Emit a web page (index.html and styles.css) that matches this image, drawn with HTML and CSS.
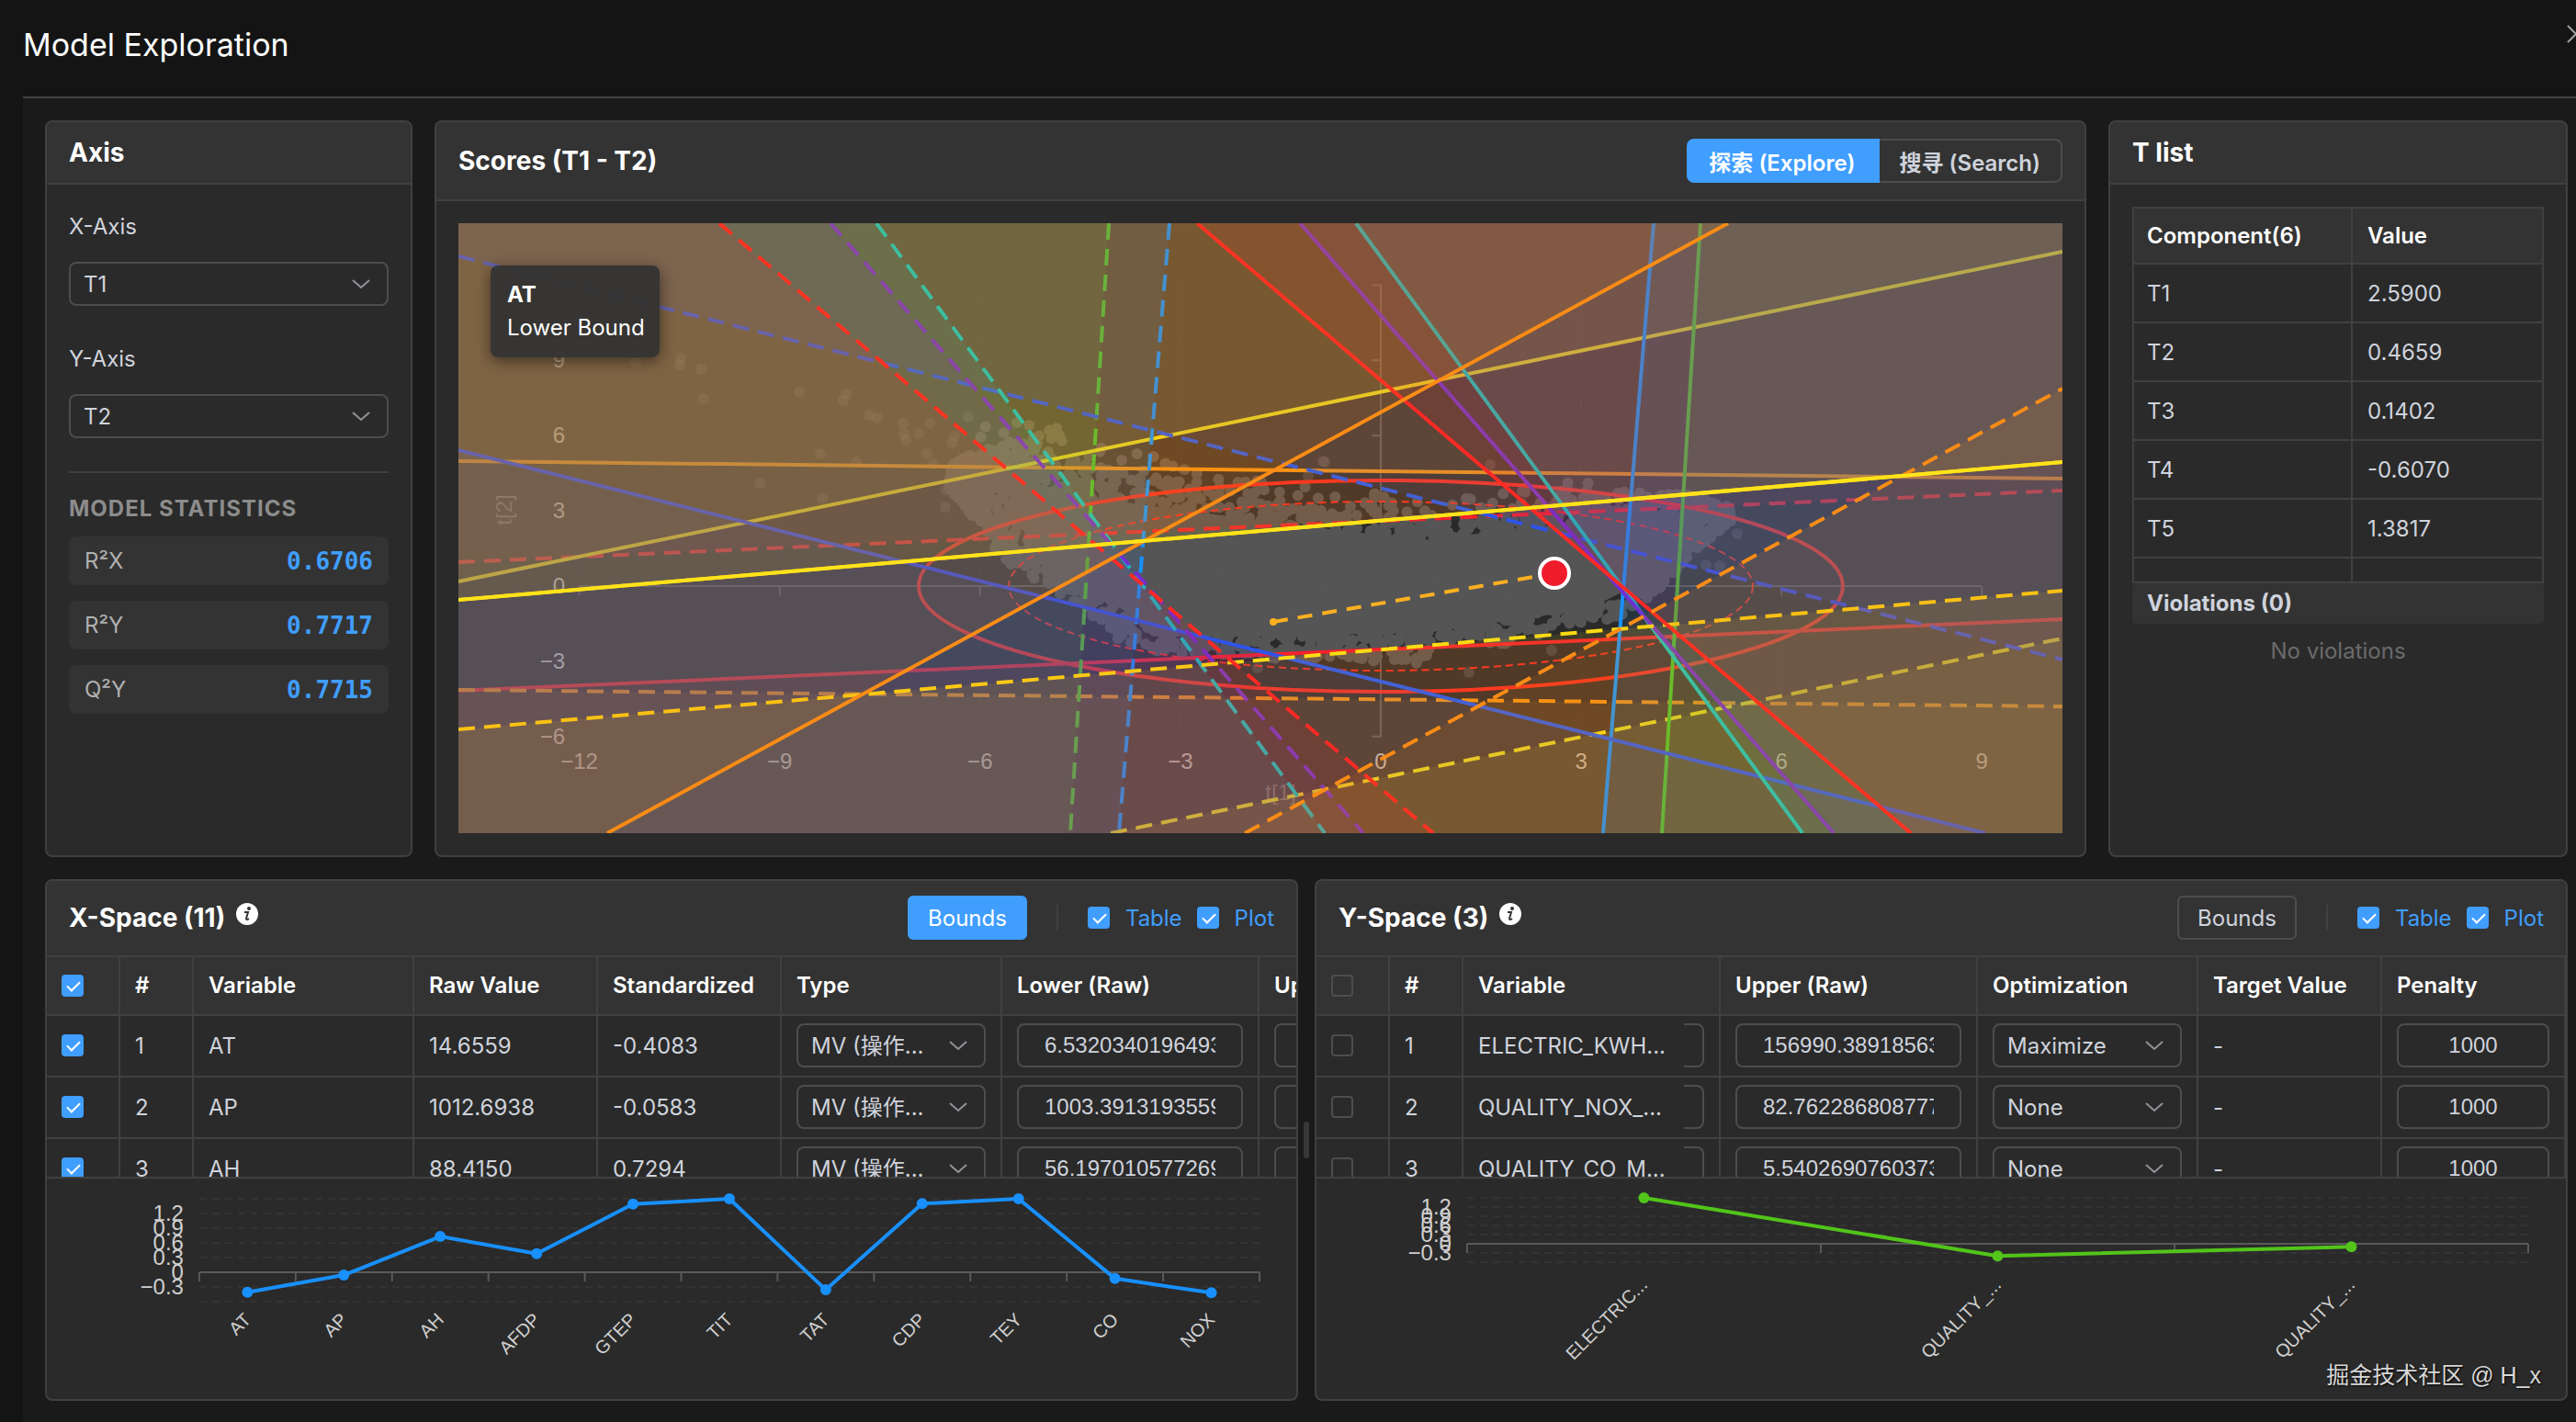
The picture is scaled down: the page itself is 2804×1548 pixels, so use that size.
FILE: index.html
```
<!DOCTYPE html>
<html lang="zh-CN">
<head>
    <meta charset="UTF-8">
    <meta name="viewport" content="width=device-width, initial-scale=1.0">
    <title>Model Exploration</title>
    <link rel="stylesheet" href="styles.css">
</head>
<body>
    <header class="page-header">
        <h1>Model Exploration</h1>
        <button class="close-btn" type="button" aria-label="Close">
            <svg viewBox="0 0 20 20" width="20" height="20"><path d="M1 1L19 19M19 1L1 19"/></svg>
        </button>
    </header>

    <main class="content">
        <div class="top-row">
            <section class="panel">
                <div class="panel-header"><h2>Axis</h2></div>
                <div class="panel-body">
                    <div class="field">
                        <label for="x-axis">X-Axis</label>
                        <div class="select-box">
                            <select id="x-axis"><option>T1</option><option>T2</option></select>
                            <svg class="chevron" viewBox="0 0 20 12"><path d="M1 2L10 10L19 2"/></svg>
                        </div>
                    </div>
                    <div class="field">
                        <label for="y-axis">Y-Axis</label>
                        <div class="select-box">
                            <select id="y-axis"><option>T2</option><option>T1</option></select>
                            <svg class="chevron" viewBox="0 0 20 12"><path d="M1 2L10 10L19 2"/></svg>
                        </div>
                    </div>
                    <div class="stats">
                        <h3>MODEL STATISTICS</h3>
                        <div class="stat"><span>R²X</span><strong>0.6706</strong></div>
                        <div class="stat"><span>R²Y</span><strong>0.7717</strong></div>
                        <div class="stat"><span>Q²Y</span><strong>0.7715</strong></div>
                    </div>
                </div>
            </section>

            <section class="panel">
                <div class="panel-header tall">
                    <h2>Scores (T1 - T2)</h2>
                    <div class="mode-switch">
                        <button type="button" class="active">探索 (Explore)</button>
                        <button type="button">搜寻 (Search)</button>
                    </div>
                </div>
                <div class="plot-body">
                    <div class="plot">
                        <svg id="scores" viewBox="0 0 1746 664"></svg>
                        <div class="tooltip">
                            <strong>AT</strong>
                            <span>Lower Bound</span>
                        </div>
                    </div>
                </div>
            </section>

            <section class="panel">
                <div class="panel-header"><h2>T list</h2></div>
                <div class="panel-body">
                    <div class="t-list">
                        <table>
                            <thead>
                                <tr><th class="col-component">Component(6)</th><th>Value</th></tr>
                            </thead>
                            <tbody>
                                <tr><td>T1</td><td>2.5900</td></tr>
                                <tr><td>T2</td><td>0.4659</td></tr>
                                <tr><td>T3</td><td>0.1402</td></tr>
                                <tr><td>T4</td><td>-0.6070</td></tr>
                                <tr><td>T5</td><td>1.3817</td></tr>
                                <tr><td></td><td></td></tr>
                            </tbody>
                        </table>
                    </div>
                    <h3 class="violations-title">Violations (0)</h3>
                    <p class="no-violations">No violations</p>
                </div>
            </section>
        </div>

        <div class="bottom-row">
            <section class="panel">
                <div class="panel-header space-header">
                    <h2>X-Space (11)</h2>
                    <svg class="info" viewBox="0 0 24 24"><circle cx="12" cy="12" r="12"/><path class="info-mark" d="M9 10H13L11 17Q11 19 14 17"/><circle class="info-dot" cx="14" cy="6" r="2"/></svg>
                    <button type="button" class="bounds active">Bounds</button>
                    <span class="divider"></span>
                    <label class="toggle"><input type="checkbox" checked>Table</label>
                    <label class="toggle"><input type="checkbox" checked>Plot</label>
                </div>
                <div class="table-wrap">
                    <table class="x-table">
                        <colgroup>
                            <col class="w80"><col class="w80"><col class="w240"><col class="w200"><col class="w200"><col class="w240"><col class="w280"><col class="w280">
                        </colgroup>
                        <thead>
                            <tr>
                                <th class="check"><input type="checkbox" aria-label="Select all" checked></th>
                                <th>#</th><th>Variable</th><th>Raw Value</th><th>Standardized</th><th>Type</th><th>Lower (Raw)</th><th>Upper (Raw)</th>
                            </tr>
                        </thead>
                        <tbody>
                            <tr>
                                <td class="check"><input type="checkbox" aria-label="AT" checked></td>
                                <td>1</td><td>AT</td><td>14.6559</td><td>-0.4083</td>
                                <td><div class="select-box"><select aria-label="AT type"><option>MV (操作...</option></select><svg class="chevron" viewBox="0 0 20 12"><path d="M1 2L10 10L19 2"/></svg></div></td>
                                <td><input class="num" type="text" aria-label="AT lower" value="6.53203401964932"></td>
                                <td><input class="num" type="text" aria-label="AT upper"></td>
                            </tr>
                            <tr>
                                <td class="check"><input type="checkbox" aria-label="AP" checked></td>
                                <td>2</td><td>AP</td><td>1012.6938</td><td>-0.0583</td>
                                <td><div class="select-box"><select aria-label="AP type"><option>MV (操作...</option></select><svg class="chevron" viewBox="0 0 20 12"><path d="M1 2L10 10L19 2"/></svg></div></td>
                                <td><input class="num" type="text" aria-label="AP lower" value="1003.39131935598"></td>
                                <td><input class="num" type="text" aria-label="AP upper"></td>
                            </tr>
                            <tr>
                                <td class="check"><input type="checkbox" aria-label="AH" checked></td>
                                <td>3</td><td>AH</td><td>88.4150</td><td>0.7294</td>
                                <td><div class="select-box"><select aria-label="AH type"><option>MV (操作...</option></select><svg class="chevron" viewBox="0 0 20 12"><path d="M1 2L10 10L19 2"/></svg></div></td>
                                <td><input class="num" type="text" aria-label="AH lower" value="56.1970105772698"></td>
                                <td><input class="num" type="text" aria-label="AH upper"></td>
                            </tr>
                        </tbody>
                    </table>
                </div>
                <svg id="x-chart" class="line-chart" viewBox="0 0 1361 240"></svg>
            </section>

            <div class="splitter"><span></span></div>

            <section class="panel">
                <div class="panel-header space-header">
                    <h2>Y-Space (3)</h2>
                    <svg class="info" viewBox="0 0 24 24"><circle cx="12" cy="12" r="12"/><path class="info-mark" d="M9 10H13L11 17Q11 19 14 17"/><circle class="info-dot" cx="14" cy="6" r="2"/></svg>
                    <button type="button" class="bounds">Bounds</button>
                    <span class="divider"></span>
                    <label class="toggle"><input type="checkbox" checked>Table</label>
                    <label class="toggle"><input type="checkbox" checked>Plot</label>
                </div>
                <div class="table-wrap">
                    <table class="y-table">
                        <colgroup>
                            <col class="w80"><col class="w80"><col class="w240"><col class="w40"><col class="w280"><col class="w240"><col class="w200"><col class="w200">
                        </colgroup>
                        <thead>
                            <tr>
                                <th class="check"><input type="checkbox" aria-label="Select all"></th>
                                <th>#</th><th class="fixed-edge">Variable</th><th></th><th>Upper (Raw)</th><th>Optimization</th><th>Target Value</th><th>Penalty</th>
                            </tr>
                        </thead>
                        <tbody>
                            <tr>
                                <td class="check"><input type="checkbox" aria-label="Electric"></td>
                                <td>1</td><td class="fixed-edge">ELECTRIC_KWH...</td>
                                <td class="scrolled"><span class="input-end"></span></td>
                                <td><input class="num" type="text" aria-label="Electric upper" value="156990.389185632"></td>
                                <td><div class="select-box"><select aria-label="Electric optimization"><option>Maximize</option></select><svg class="chevron" viewBox="0 0 20 12"><path d="M1 2L10 10L19 2"/></svg></div></td>
                                <td>-</td>
                                <td><input class="num center" type="text" aria-label="Electric penalty" value="1000"></td>
                            </tr>
                            <tr>
                                <td class="check"><input type="checkbox" aria-label="Quality NOX"></td>
                                <td>2</td><td class="fixed-edge">QUALITY_NOX_...</td>
                                <td class="scrolled"><span class="input-end"></span></td>
                                <td><input class="num" type="text" aria-label="NOX upper" value="82.7622868087772"></td>
                                <td><div class="select-box"><select aria-label="NOX optimization"><option>None</option></select><svg class="chevron" viewBox="0 0 20 12"><path d="M1 2L10 10L19 2"/></svg></div></td>
                                <td>-</td>
                                <td><input class="num center" type="text" aria-label="NOX penalty" value="1000"></td>
                            </tr>
                            <tr>
                                <td class="check"><input type="checkbox" aria-label="Quality CO"></td>
                                <td>3</td><td class="fixed-edge">QUALITY_CO_M...</td>
                                <td class="scrolled"><span class="input-end"></span></td>
                                <td><input class="num" type="text" aria-label="CO upper" value="5.54026907603732"></td>
                                <td><div class="select-box"><select aria-label="CO optimization"><option>None</option></select><svg class="chevron" viewBox="0 0 20 12"><path d="M1 2L10 10L19 2"/></svg></div></td>
                                <td>-</td>
                                <td><input class="num center" type="text" aria-label="CO penalty" value="1000"></td>
                            </tr>
                        </tbody>
                    </table>
                </div>
                <svg id="y-chart" class="line-chart" viewBox="0 0 1361 240"></svg>
            </section>
        </div>
    </main>

    <div class="watermark">掘金技术社区 @ H_x</div>

    <script src="script.js"></script>
</body>
</html>
```
FILE: styles.css
```
* {
    box-sizing: border-box;
}
body {
    margin: 0;
    min-height: 100vh;
    display: flex;
    flex-direction: column;
    background: #141414;
    color: #cfd3dc;
    font-family: Inter, "Noto Sans CJK SC", sans-serif;
    font-size: 24px;
    overflow: hidden;
}
h1, h2, h3, p {
    margin: 0;
}
button, input, select {
    font: inherit;
    color: inherit;
}

.page-header {
    position: relative;
    height: 107px;
    margin-left: 25px;
    padding-top: 27px;
    border-bottom: 2px solid #414141;
    overflow: hidden;
}
.page-header h1 {
    color: #fff;
    font-size: 34px;
    line-height: 44px;
    font-weight: 400;
}
.close-btn {
    position: absolute;
    top: 27px;
    right: -10px;
    padding: 0;
    border: 0;
    background: none;
    line-height: 0;
}
.close-btn path {
    fill: none;
    stroke: #a0a0a0;
    stroke-width: 2;
}

.content {
    flex: 1;
    display: grid;
    grid-template-rows: minmax(0, 141fr) minmax(0, 100fr);
    gap: 24px;
    margin-left: 25px;
    padding: 24px 9px 23px 24px;
    background: #1a1a1a;
}
.top-row {
    display: grid;
    grid-template-columns: 400px minmax(0, 1fr) 500px;
    gap: 24px;
}
.bottom-row {
    display: grid;
    grid-template-columns: minmax(0, 1fr) 18px minmax(0, 1fr);
}

.panel {
    display: flex;
    flex-direction: column;
    min-height: 0;
    background: #2a2a2a;
    border: 2px solid #404040;
    border-radius: 8px;
    overflow: hidden;
}
.panel-header {
    flex: none;
    display: flex;
    align-items: center;
    height: 68px;
    padding: 0 24px;
    background: #333;
    border-bottom: 2px solid #404040;
}
.panel-header.tall {
    justify-content: space-between;
    height: 86px;
}
.panel-header h2 {
    color: #fff;
    font-size: 28px;
    line-height: 36px;
    font-weight: 700;
}
.panel-body {
    padding: 24px;
}

/* axis panel */
.field {
    margin-bottom: 36px;
}
.field label {
    display: block;
    margin-bottom: 16px;
    font-size: 24px;
    line-height: 44px;
}
.select-box {
    position: relative;
}
.select-box select {
    display: block;
    width: 100%;
    height: 48px;
    padding: 0 40px 0 14px;
    appearance: none;
    background: transparent;
    border: 2px solid #4c4d4f;
    border-radius: 8px;
}
.chevron {
    position: absolute;
    top: 18px;
    right: 20px;
    width: 20px;
    height: 12px;
    fill: none;
    stroke: #909399;
    stroke-width: 2;
    pointer-events: none;
}
.stats {
    display: flex;
    flex-direction: column;
    gap: 17px;
    margin-top: 36px;
    border-top: 2px solid #404040;
    padding-top: 22px;
}
.stats h3 {
    color: #8c8c8c;
    font-size: 24px;
    line-height: 34px;
    font-weight: 700;
    letter-spacing: 1px;
    margin-bottom: -4px;
}
.stat {
    display: flex;
    align-items: center;
    justify-content: space-between;
    height: 53px;
    padding: 0 17px;
    background: #333;
    border-radius: 8px;
    color: #b0b0b0;
}
.stat strong {
    color: #409eff;
    font-family: "DejaVu Sans Mono", monospace;
    font-size: 26px;
}

/* scores panel */
.mode-switch {
    display: flex;
}
.mode-switch button {
    height: 48px;
    padding: 0 22px;
    background: transparent;
    border: 2px solid #4c4d4f;
    border-left: 0;
    border-radius: 0 8px 8px 0;
    font-size: 24px;
    font-weight: 600;
    white-space: nowrap;
}
.mode-switch .active {
    padding: 0 24px;
    background: #409eff;
    border-color: #409eff;
    border-radius: 8px 0 0 8px;
    color: #fff;
}
.plot-body {
    flex: 1;
    min-height: 0;
    padding: 24px 24px 0;
}
.plot {
    position: relative;
}
.plot svg {
    display: block;
    width: 100%;
    background: #2a2a2a;
}
.tooltip {
    position: absolute;
    top: 46px;
    left: 35px;
    display: flex;
    flex-direction: column;
    padding: 14px 16px 14px 18px;
    background: rgba(50, 50, 50, 0.94);
    border-radius: 8px;
    box-shadow: 0 4px 16px rgba(0, 0, 0, 0.5);
    color: #fff;
    font-size: 24px;
    line-height: 36px;
}

/* tables */
table {
    table-layout: fixed;
    border-collapse: separate;
    border-spacing: 0;
}
th, td {
    padding: 0 16px;
    border-right: 2px solid #404040;
    border-bottom: 2px solid #404040;
    text-align: left;
    white-space: nowrap;
}
th {
    background: #333;
    color: #fff;
    font-weight: 600;
}
.t-list {
    height: 410px;
    border: 2px solid #404040;
    border-right: 0;
    overflow: hidden;
}
.t-list table {
    width: 100%;
}
.t-list th, .t-list td {
    height: 64px;
    padding: 0 14px;
}
.t-list th + th, .t-list td + td {
    padding-left: 16px;
}
.t-list th {
    height: 61px;
}
.col-component {
    width: 238px;
}
.violations-title {
    padding: 0 16px;
    background: #333;
    border-radius: 4px;
    color: #cfd3dc;
    font-size: 24px;
    line-height: 44px;
    font-weight: 700;
}
.no-violations {
    padding-top: 8px;
    color: #6b6b6b;
    line-height: 44px;
    text-align: center;
}

/* space panels */
.space-header {
    height: 83px;
}
.space-header .info {
    width: 24px;
    height: 24px;
    margin: -8px auto 0 12px;
    fill: #fff;
}
.info-mark {
    fill: none;
    stroke: #333;
    stroke-width: 2;
}
.info .info-dot {
    fill: #333;
}
.bounds {
    height: 48px;
    padding: 0 20px;
    background: transparent;
    border: 2px solid #4c4d4f;
    border-radius: 6px;
}
.bounds.active {
    background: #409eff;
    border-color: #409eff;
    color: #fff;
}
.divider {
    width: 2px;
    height: 28px;
    margin: 0 32px;
    background: #404040;
}
.toggle {
    display: flex;
    align-items: center;
    gap: 17px;
    color: #409eff;
}
.toggle + .toggle {
    margin-left: 16px;
}
input[type="checkbox"] {
    position: relative;
    display: block;
    flex: none;
    width: 24px;
    height: 24px;
    margin: 0;
    appearance: none;
    border: 2px solid #4c4d4f;
    border-radius: 4px;
}
input[type="checkbox"]:checked {
    background: #409eff;
    border-color: #409eff;
}
input[type="checkbox"]:checked::after {
    content: "";
    position: absolute;
    top: 2px;
    left: 7px;
    width: 6px;
    height: 12px;
    border: solid #fff;
    border-width: 0 2px 2px 0;
    transform: rotate(45deg);
}
.table-wrap {
    flex: none;
    height: 241px;
    border-bottom: 2px solid #404040;
    overflow: hidden;
}
.x-table {
    width: 1600px;
}
.y-table {
    width: 1360px;
}
.table-wrap th {
    height: 64px;
}
.table-wrap td {
    height: 67px;
}
.w40 { width: 40px; }
.w80 { width: 80px; }
.w200 { width: 200px; }
.w240 { width: 240px; }
.w280 { width: 280px; }
.num {
    display: block;
    width: 100%;
    height: 48px;
    padding: 0 28px;
    background: transparent;
    border: 2px solid #4c4d4f;
    border-radius: 8px;
    font-family: "Liberation Sans", sans-serif;
}
.num.center {
    text-align: center;
}
.fixed-edge {
    border-right: 0;
}
.scrolled {
    padding: 0 16px 0 0;
}
.input-end {
    display: block;
    height: 48px;
    border: 2px solid #4c4d4f;
    border-left: 0;
    border-radius: 0 8px 8px 0;
}
.line-chart {
    display: block;
    width: 100%;
}
.splitter {
    display: flex;
    align-items: center;
    justify-content: center;
}
.splitter span {
    width: 6px;
    height: 40px;
    background: #383838;
    border-radius: 3px;
}

/* charts */
svg text {
    font-family: "Liberation Sans", sans-serif;
    font-size: 24px;
    fill: #cfcfcf;
}
svg .category {
    font-size: 20px;
}
svg .axis-name {
    fill: #6e6e6e;
}
.tick {
    stroke: #5a5a5a;
    stroke-width: 2;
}
.grid-line {
    stroke: #333;
    stroke-width: 2;
    stroke-dasharray: 8 6;
}

.watermark {
    position: absolute;
    right: 38px;
    bottom: 32px;
    color: #d8d8d8;
    font-family: "Liberation Sans", "Noto Sans CJK SC", sans-serif;
    font-size: 25px;
    line-height: 38px;
    text-shadow: 1px 1px 2px #000;
}
```
FILE: script.js
```
const NS = "http://www.w3.org/2000/svg";

function add(parent, tag, attrs, text) {
    const el = document.createElementNS(NS, tag);
    for (const key in attrs) el.setAttribute(key, attrs[key]);
    if (text !== undefined) el.textContent = text;
    parent.appendChild(el);
    return el;
}

function label(value) {
    return String(value).replace("-", "−");
}

// ---- line charts under the tables ----
function drawLineChart(id, opt) {
    const svg = document.getElementById(id);
    const yOf = v => opt.zero - v / 0.3 * opt.step;
    [1.5, 1.2, 0.9, 0.6, 0.3, 0, -0.3, -0.6].forEach(v => {
        const y = yOf(v);
        add(svg, "line", { x1: opt.left, x2: opt.right, y1: y, y2: y, class: v === 0 ? "tick" : "grid-line" });
        if (v < 1.5 && v > -0.6) {
            add(svg, "text", { x: opt.left - 17, y: y + 8, "text-anchor": "end" }, label(v));
        }
    });
    const band = (opt.right - opt.left) / opt.data.length;
    for (let i = 0; i <= opt.data.length; i++) {
        const x = opt.left + band * i;
        add(svg, "line", { x1: x, x2: x, y1: opt.zero, y2: opt.zero + 10, class: "tick" });
    }
    const points = opt.data.map((d, i) => [opt.left + band * (i + 0.5), yOf(d[1])]);
    add(svg, "polyline", { points: points.join(" "), fill: "none", stroke: opt.color, "stroke-width": 4, "stroke-linejoin": "round" });
    points.forEach((p, i) => {
        add(svg, "circle", { cx: p[0], cy: p[1], r: 6, fill: opt.color });
        add(svg, "text", {
            class: "category",
            "text-anchor": "end",
            transform: `translate(${p[0]} ${opt.labelY}) rotate(-45)`,
            y: 7
        }, opt.data[i][0]);
    });
}

drawLineChart("x-chart", {
    left: 166, right: 1321, zero: 102, step: 16, labelY: 150, color: "#1890ff",
    data: [["AT", -0.4083], ["AP", -0.0583], ["AH", 0.7294], ["AFDP", 0.38], ["GTEP", 1.39], ["TIT", 1.5],
        ["TAT", -0.36], ["CDP", 1.4], ["TEY", 1.5], ["CO", -0.13], ["NOX", -0.42]]
});
drawLineChart("y-chart", {
    left: 164, right: 1320, zero: 71, step: 10, labelY: 112, color: "#52c41a",
    data: [["ELECTRIC...", 1.5], ["QUALITY_...", -0.4], ["QUALITY_...", -0.1]]
});

// ---- scores plot ----
const scores = document.getElementById("scores");
const X0 = 1004, Y0 = 395;

[-12, -9, -6, -3, 0, 3, 6, 9].forEach(v => {
    const x = X0 + v * 72.7;
    add(scores, "line", { x1: x, x2: x, y1: 67, y2: 559, stroke: "#333", "stroke-width": 1, "stroke-dasharray": "8 6" });
    add(scores, "line", { x1: x, x2: x, y1: Y0, y2: Y0 + 10, class: "tick" });
    add(scores, "text", { x: x, y: 594, "text-anchor": "middle" }, label(v));
});
[12, 9, 6, 3, 0, -3, -6].forEach(v => {
    const y = Y0 - v * 27.3;
    add(scores, "line", { x1: X0 - 10, x2: X0, y1: y, y2: y, class: "tick" });
    if (v < 12) add(scores, "text", { x: 116, y: y + 8, "text-anchor": "end" }, label(v));
});
add(scores, "line", { x1: 132, x2: 1658, y1: Y0, y2: Y0, class: "tick" });
add(scores, "line", { x1: X0, x2: X0, y1: 67, y2: 559, class: "tick" });
add(scores, "text", { x: 895, y: 628, "text-anchor": "middle", class: "axis-name" }, "t[1]");
add(scores, "text", { transform: "translate(58 312) rotate(-90)", "text-anchor": "middle", class: "axis-name" }, "t[2]");

// sample cloud
let seed = 7;
function rnd() {
    seed = (seed * 16807) % 2147483647;
    return seed / 2147483647;
}
const upper = [[530, 268], [560, 248], [600, 238], [650, 245], [700, 265], [760, 275], [850, 298], [950, 314], [1000, 318], [1060, 325], [1120, 322], [1180, 305], [1260, 292], [1340, 296], [1390, 310]];
const lower = [[530, 285], [560, 320], [590, 365], [640, 395], [680, 420], [720, 455], [770, 468], [880, 475], [950, 474], [1050, 480], [1064, 455], [1130, 462], [1200, 440], [1270, 428], [1310, 395], [1340, 362], [1390, 320]];
function edge(list, x) {
    for (let i = 1; i < list.length; i++) {
        const [ax, ay] = list[i - 1], [bx, by] = list[i];
        if (x <= bx) return ay + (by - ay) * (x - ax) / (bx - ax);
    }
    return list[list.length - 1][1];
}
const cloud = add(scores, "g", { fill: "#555" });
add(cloud, "path", { d: "M590 275L700 300L880 325L1050 345L1180 330L1330 310L1290 390L1230 420L1060 445L880 450L770 450L690 400L630 370Z" });
for (let i = 0; i < 2600; i++) {
    const x = 535 + rnd() * 850;
    const top = edge(upper, x), bottom = edge(lower, x);
    const y = top + (bottom - top) * rnd();
    add(cloud, "circle", { cx: x.toFixed(1), cy: y.toFixed(1), r: 6 });
}
for (let i = 0; i < 90; i++) {
    const x = 535 + rnd() * 700;
    add(cloud, "circle", { cx: x.toFixed(1), cy: (edge(upper, x) - rnd() * 28 + 4).toFixed(1), r: 6 });
}
[[242, 147], [241, 154], [193, 151], [264, 159], [267, 191], [371, 184], [422, 186], [419, 193], [447, 209], [456, 212], [484, 218], [485, 229], [487, 236], [501, 229], [513, 218],
    [555, 211], [540, 232], [537, 239], [394, 251], [433, 260], [328, 283], [396, 300], [510, 251], [517, 262], [530, 309], [531, 290], [941, 259], [943, 260], [925, 275], [1123, 263],
    [1190, 465], [1100, 489], [870, 484], [1373, 373], [1358, 372], [1392, 338]
].forEach(p => add(cloud, "circle", { cx: p[0], cy: p[1], r: 6, opacity: 0.6 }));

add(scores, "ellipse", { cx: X0, cy: Y0, rx: 503, ry: 115, fill: "none", stroke: "#ff2a20", "stroke-width": 4 });
add(scores, "ellipse", { cx: X0, cy: Y0, rx: 405, ry: 92, fill: "none", stroke: "#ff2a20", "stroke-width": 2, "stroke-dasharray": "8 5" });

// bounds: [colour, lower bound (solid), upper bound (dashed)] with lines as x1, y1, x2, y2
const bounds = [
    ["#f5222d", [0, 509, 1746, 431], [0, 369, 1746, 291]],
    ["#fa8c16", [0, 259, 1746, 278], [0, 508, 1746, 526]],
    ["#fadb14", [0, 390, 1746, 31], [710, 664, 1746, 452]],
    ["#52c41a", [1352, 0, 1310, 664], [708, 0, 666, 664]],
    ["#1890ff", [1301, 0, 1246, 664], [774, 0, 719, 664]],
    ["#2f54eb", [0, 247, 1662, 664], [0, 36, 1746, 475]],
    ["#13c2c2", [977, 0, 1463, 664], [455, 0, 943, 664]],
    ["#722ed1", [916, 0, 1497, 664], [405, 0, 985, 664]],
    ["#fadb14", [0, 410, 1746, 260], [0, 551, 1746, 400]],
    ["#ff2a25", [804, 0, 1581, 664], [284, 0, 1061, 664]],
    ["#fa8c16", [162, 664, 1382, 0], [856, 664, 1746, 180]]
];

// area on the far side of a line, seen from its partner
function outside(line, partner) {
    const [x1, y1, x2, y2] = line;
    const len = Math.hypot(x2 - x1, y2 - y1);
    const dx = (x2 - x1) / len * 3000, dy = (y2 - y1) / len * 3000;
    let nx = -dy, ny = dx;
    const mx = (partner[0] + partner[2]) / 2, my = (partner[1] + partner[3]) / 2;
    if ((mx - x1) * nx + (my - y1) * ny > 0) {
        nx = -nx;
        ny = -ny;
    }
    return [[x1 - dx, y1 - dy], [x2 + dx, y2 + dy], [x2 + dx + nx, y2 + dy + ny], [x1 - dx + nx, y1 - dy + ny]].join(" ");
}

function drawLine(l, color, dash) {
    add(scores, "line", { x1: l[0], y1: l[1], x2: l[2], y2: l[3], stroke: color, "stroke-width": 4, "stroke-dasharray": dash });
}

bounds.forEach(([color, solid, dashed]) => {
    add(scores, "polygon", { points: outside(solid, dashed), fill: color, "fill-opacity": 0.1 });
    add(scores, "polygon", { points: outside(dashed, solid), fill: color, "fill-opacity": 0.1 });
    drawLine(solid, color, "none");
    drawLine(dashed, color, "18 10");
});

// hovered bound stays on top
drawLine([0, 410, 1746, 260], "#ffe31a", "none");

// current point and its path
add(scores, "line", { x1: 887, y1: 434, x2: 1176, y2: 384, stroke: "#ffb020", "stroke-width": 4, "stroke-dasharray": "16 11" });
add(scores, "circle", { cx: 887, cy: 434, r: 4, fill: "#ffb020" });
add(scores, "circle", { cx: 1193, cy: 381, r: 16, fill: "#f01c2c", stroke: "#fff", "stroke-width": 4 });
```
